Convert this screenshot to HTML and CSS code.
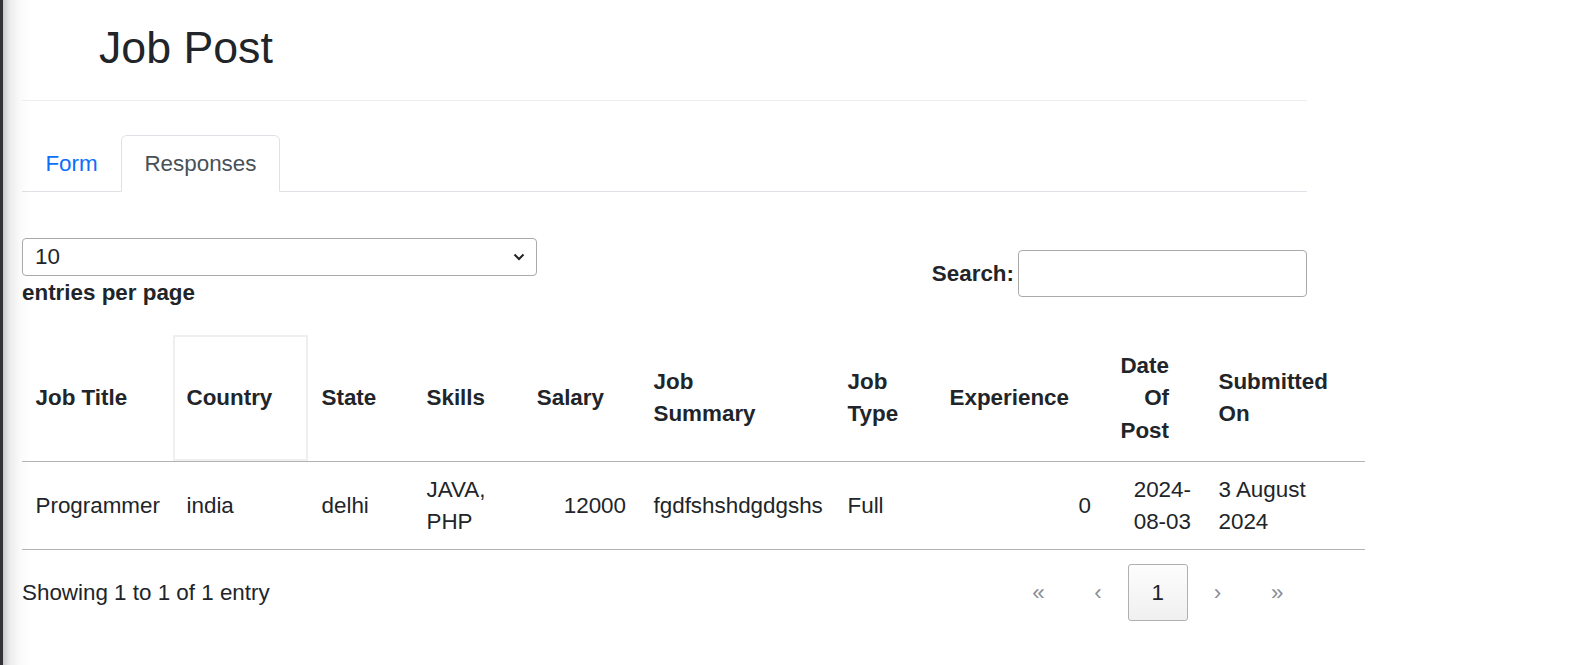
FILE: index.html
```html
<!DOCTYPE html>
<html lang="en">
<head>
<meta charset="utf-8">
<title>Job Post</title>
<link rel="stylesheet" href="styles.css">
</head>
<body>
<div class="container">
  <header class="page-head">
    <h2 class="page-title">Job Post</h2>
  </header>

  <ul class="tabs">
    <li><a class="tab">Form</a></li>
    <li><a class="tab active">Responses</a></li>
  </ul>

  <div class="controls">
    <div class="length">
      <div class="select">
        <span>10</span>
        <svg class="chev" width="12" height="8" viewBox="0 0 12 8"><path d="M1.5 1.5 L6 6 L10.5 1.5" fill="none" stroke="#222" stroke-width="2"/></svg>
      </div>
      <div class="length-label">entries per page</div>
    </div>
    <div class="search">
      <span class="search-label">Search:</span>
      <div class="search-input"></div>
    </div>
  </div>

  <table class="data">
    <colgroup>
      <col style="width:151px"><col style="width:135px"><col style="width:105px"><col style="width:109px"><col style="width:118px">
      <col style="width:194px"><col style="width:102px"><col style="width:169px"><col style="width:100px"><col style="width:160px">
    </colgroup>
    <thead>
      <tr>
        <th>Job Title</th>
        <th class="focus">Country</th>
        <th>State</th>
        <th>Skills</th>
        <th class="num">Salary</th>
        <th>Job Summary</th>
        <th>Job Type</th>
        <th class="num">Experience</th>
        <th class="num">Date Of Post</th>
        <th>Submitted On</th>
      </tr>
    </thead>
    <tbody>
      <tr>
        <td>Programmer</td>
        <td>india</td>
        <td>delhi</td>
        <td>JAVA, PHP</td>
        <td class="num">12000</td>
        <td>fgdfshshdgdgshs</td>
        <td>Full</td>
        <td class="num">0</td>
        <td class="num">2024-08-03</td>
        <td>3 August 2024</td>
      </tr>
    </tbody>
  </table>

  <div class="footer">
    <div class="info">Showing 1 to 1 of 1 entry</div>
    <nav class="paging">
      <span class="pbtn disabled">«</span>
      <span class="pbtn disabled">‹</span>
      <span class="pbtn current">1</span>
      <span class="pbtn disabled">›</span>
      <span class="pbtn disabled">»</span>
    </nav>
  </div>
</div>
</body>
</html>
```

FILE: styles.css
```css
html, body {
  margin: 0;
  padding: 0;
}
body {
  min-height: 665px;
  font-family: "Liberation Sans", Arial, sans-serif;
  font-size: 22.4px;
  line-height: 32.3px;
  color: #212529;
  background: linear-gradient(to right, #303236 0, #303236 3px, #c9c9c9 3px, #ececec 10px, #fafafa 20px, #ffffff 30px);
}
.container {
  margin-left: 22px;
  width: 1285px;
}
.page-head {
  padding: 20.6px 0 0 77px;
  height: 100.6px;
  box-sizing: border-box;
  border-bottom: 1px solid #eeeeee;
}
.page-title {
  margin: 0;
  font-size: 44.7px;
  line-height: 53.8px;
  font-weight: 400;
}
.tabs {
  list-style: none;
  margin: 34px 0 0 0;
  padding: 0;
  display: flex;
  border-bottom: 1px solid #dee2e6;
}
.tabs li {
  margin-bottom: -1px;
}
.tab {
  display: block;
  padding: 11px 22.4px;
  line-height: 33.6px;
  border: 1px solid transparent;
  border-radius: 5.6px 5.6px 0 0;
  color: #0d6efd;
}
.tab.active {
  color: #495057;
  background: #fff;
  border-color: #dee2e6 #dee2e6 #fff;
}
.controls {
  margin-top: 46px;
  display: flex;
  justify-content: space-between;
  align-items: center;
}
.length {
  width: 515px;
}
.select {
  height: 38px;
  box-sizing: border-box;
  border: 1px solid #aaaaaa;
  border-radius: 4px;
  background: #fff;
  display: flex;
  align-items: center;
  justify-content: space-between;
  padding: 0 11px 0 12px;
  line-height: 24px;
}
.chev {
  display: block;
}
.length-label {
  font-weight: 700;
  margin-top: 1px;
}
.search {
  display: flex;
  align-items: center;
  gap: 4px;
}
.search-label {
  font-weight: 700;
}
.search-input {
  width: 289px;
  height: 47px;
  box-sizing: border-box;
  border: 1px solid #aaaaaa;
  border-radius: 4px;
  background: #fff;
}
.data {
  margin-top: 26px;
  width: 1343px;
  table-layout: fixed;
  border-collapse: collapse;
  border-spacing: 0;
}
.data th {
  padding: 14.5px 36px 14.5px 13.5px;
  text-align: left;
  font-weight: 700;
  vertical-align: middle;
  border-bottom: 1px solid #b3b3b3;
  overflow: visible;
}
.data th.num {
  text-align: right;
}
.data th.focus {
  box-shadow: inset 0 0 0 2px #efefef;
}
.data td {
  padding: 11.2px 14px 11.2px 13.5px;
  vertical-align: middle;
  border-bottom: 1px solid #b3b3b3;
}
.data td.num {
  text-align: right;
}
.footer {
  margin-top: 14px;
  display: flex;
  justify-content: space-between;
  align-items: center;
}
.paging {
  display: flex;
}
.pbtn {
  display: block;
  width: 59.7px;
  box-sizing: border-box;
  padding: 11.2px 0;
  text-align: center;
  border: 1px solid transparent;
  border-radius: 3px;
}
.pbtn.disabled {
  color: #8a8f96;
}
.pbtn.current {
  border-color: #b0b0b0;
  background: linear-gradient(to bottom, #fdfdfd 0%, #f0f0f0 100%);
  color: #212529;
}
```
